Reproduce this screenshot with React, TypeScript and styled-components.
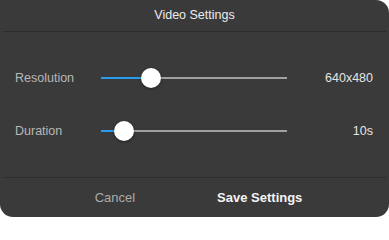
import { createGlobalStyle } from 'styled-components';
import styled from 'styled-components';

const GlobalStyle = createGlobalStyle`
  html, body {
    margin: 0;
    padding: 0;
    background: #ffffff;
  }
  * {
    box-sizing: border-box;
  }
`;

const Dialog = styled.div`
  display: flex;
  flex-direction: column;
  width: 389px;
  height: 217px;
  background: #3a3a3a;
  border-radius: 0 13px 13px 13px;
  overflow: hidden;
  font-family: 'Liberation Sans', Arial, sans-serif;
`;

const Header = styled.div`
  display: flex;
  align-items: center;
  justify-content: center;
  height: 32px;
  padding-bottom: 1px;
  border-bottom: 1px solid #2c2c2c;
  margin: 0 3px;
  color: #ececec;
  font-size: 12.5px;
`;

const Body = styled.div`
  display: flex;
  flex-direction: column;
  gap: 13px;
  padding: 26px 16px 26px 15px;
  flex: 1;
`;

const Row = styled.div`
  display: flex;
  align-items: center;
  height: 40px;
`;

const Label = styled.span`
  width: 86px;
  color: #b8b8b8;
  font-size: 12.5px;
`;

const Value = styled.span`
  flex: 1;
  text-align: right;
  color: #e4e4e4;
  font-size: 12.5px;
`;

const Track = styled.div`
  position: relative;
  width: 186px;
  height: 2px;
  background: #a0a0a0;
`;

const Fill = styled.div`
  position: absolute;
  left: 0;
  top: 0;
  height: 2px;
  background: #2a9cf0;
`;

const Thumb = styled.div`
  position: absolute;
  top: 50%;
  width: 20px;
  height: 20px;
  margin: -10px 0 0 -10px;
  border-radius: 50%;
  background: #ffffff;
  box-shadow: 0 1px 3px rgba(0, 0, 0, 0.45);
`;

const Footer = styled.div`
  display: flex;
  align-items: center;
  justify-content: center;
  gap: 82px;
  height: 40px;
  margin: 0 3px;
  padding-left: 8px;
  border-top: 1px solid #2c2c2c;
`;

const Button = styled.button<{ $primary?: boolean }>`
  border: none;
  outline: none;
  background: none;
  padding: 0;
  font-family: inherit;
  font-size: 13px;
  font-weight: ${({ $primary }) => ($primary ? 700 : 400)};
  color: ${({ $primary }) => ($primary ? '#f4f4f4' : '#ababab')};
`;

function Slider({ percent }: { percent: number }) {
  return (
    <Track>
      <Fill style={{ width: `${percent}%` }} />
      <Thumb style={{ left: `${percent}%` }} />
    </Track>
  );
}

export default function App() {
  return (
    <>
      <GlobalStyle />
      <Dialog>
        <Header>Video Settings</Header>
        <Body>
          <Row>
            <Label>Resolution</Label>
            <Slider percent={27} />
            <Value>640x480</Value>
          </Row>
          <Row>
            <Label>Duration</Label>
            <Slider percent={12.4} />
            <Value>10s</Value>
          </Row>
        </Body>
        <Footer>
          <Button>Cancel</Button>
          <Button $primary>Save Settings</Button>
        </Footer>
      </Dialog>
    </>
  );
}
